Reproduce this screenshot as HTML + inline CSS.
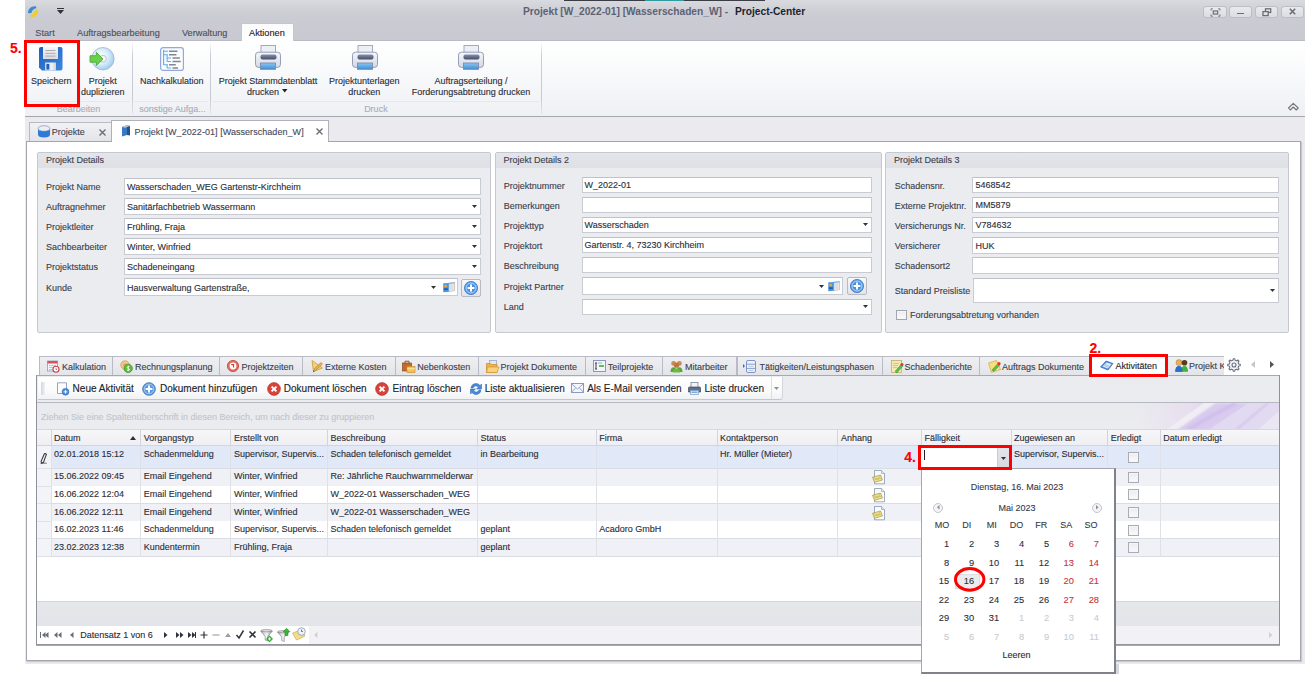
<!DOCTYPE html>
<html><head><meta charset="utf-8"><title>Project-Center</title>
<style>
*{margin:0;padding:0;box-sizing:border-box}
html,body{width:1306px;height:683px;overflow:hidden;background:#fff}
body{position:relative;font-family:"Liberation Sans",sans-serif;font-size:9px;color:#2c303b}
.a{position:absolute}
.t{position:absolute;white-space:nowrap;-webkit-text-stroke-width:0.12px}
svg{position:absolute;overflow:visible}
</style></head><body>

<div class="a" style="left:25px;top:0px;width:1280px;height:41px;background:linear-gradient(#d9dadf 0px,#cfd0d6 10px,#cacbd3 18px,#c8c9d1 40px);border-bottom:1px solid #babbc5"></div>
<div class="a" style="left:564px;top:0px;width:201px;height:1px;background:#3a3d44"></div>
<div class="a" style="left:645px;top:0px;width:39px;height:1px;background:#2f9aa0"></div>
<div class="t" style="left:523px;top:6px;font-size:10.2px;line-height:12.75px;color:#5d6273;font-weight:bold;-webkit-text-stroke-width:0">Projekt [W_2022-01] [Wasserschaden_W] -</div>
<div class="t" style="left:735px;top:6px;font-size:10.2px;line-height:12.75px;color:#20232c;font-weight:bold;-webkit-text-stroke-width:0">Project-Center</div>
<svg style="left:26.5px;top:5px" width="12" height="13" viewBox="0 0 12 13"><path d="M9 1.3C5 0.6 1 3.5 1 7.8C1.8 8.6 3.6 8.4 4.6 7.8C5 5.2 6.8 3.6 9.4 3.2Z" fill="#3b8bd0"/><path d="M3.8 12.2C8 12.7 11.2 9.2 11.2 5.2C10.4 4.4 8.8 4.6 7.8 5.2C7.4 8 5.8 9.6 3.2 10Z" fill="#f2cc2a"/></svg>
<div class="a" style="left:57px;top:8px;width:7px;height:1px;background:#30323a"></div>
<svg style="left:57px;top:10px" width="7" height="4"><path d="M0 0H7L3.5 4Z" fill="#30323a"/></svg>
<div class="a" style="left:1203px;top:5.5px;width:23.5px;height:12px;border:1px solid #bcbec6;border-radius:3px;background:linear-gradient(#e9eaee,#dcdde2)"></div>
<div class="a" style="left:1228.5px;top:5.5px;width:23.5px;height:12px;border:1px solid #bcbec6;border-radius:3px;background:linear-gradient(#e9eaee,#dcdde2)"></div>
<div class="a" style="left:1254.5px;top:5.5px;width:23.5px;height:12px;border:1px solid #bcbec6;border-radius:3px;background:linear-gradient(#e9eaee,#dcdde2)"></div>
<div class="a" style="left:1280.5px;top:5.5px;width:23.5px;height:12px;border:1px solid #bcbec6;border-radius:3px;background:linear-gradient(#e9eaee,#dcdde2)"></div>
<svg style="left:1209.5px;top:7.5px" width="11" height="9" viewBox="0 0 11 9"><path d="M1 2.5V0.8H2.8M8.2 0.8H10V2.5M10 6.5V8.2H8.2M2.8 8.2H1V6.5" stroke="#6a6d77" fill="none" stroke-width="0.9"/><rect x="3.3" y="3" width="4.4" height="3" stroke="#6a6d77" fill="none" stroke-width="1.2"/></svg>
<div class="a" style="left:1236.5px;top:12.5px;width:7px;height:1.8px;background:#6a6d77"></div>
<svg style="left:1262px;top:7.5px" width="10" height="9" viewBox="0 0 10 9"><rect x="3.5" y="0.8" width="5.2" height="3.6" stroke="#6a6d77" fill="none" stroke-width="1.3"/><rect x="1" y="3.6" width="5.2" height="4" stroke="#6a6d77" fill="#e3e4e8" stroke-width="1.3"/></svg>
<svg style="left:1288.5px;top:8px" width="7" height="7" viewBox="0 0 7 7"><path d="M0.8 0.8L6.2 6.2M6.2 0.8L0.8 6.2" stroke="#6a6d77" stroke-width="1.6"/></svg>
<div class="t" style="left:35.3px;top:28px;font-size:9.2px;line-height:11.5px;color:#4c505c;">Start</div>
<div class="t" style="left:77px;top:28px;font-size:9.2px;line-height:11.5px;color:#4c505c;">Auftragsbearbeitung</div>
<div class="t" style="left:182px;top:28px;font-size:9.2px;line-height:11.5px;color:#4c505c;">Verwaltung</div>
<div class="a" style="left:240.5px;top:23px;width:53px;height:19px;background:linear-gradient(#fbfbfc,#ffffff);border:1px solid #c4c6ce;border-bottom:none;border-radius:2px 2px 0 0"></div>
<div class="t" style="left:249px;top:28px;font-size:9.2px;line-height:11.5px;color:#1e2028;">Aktionen</div>
<div class="a" style="left:25px;top:41px;width:1280px;height:75px;background:linear-gradient(#ffffff,#f7f8fa 50%,#eff0f4)"></div>
<div class="a" style="left:25px;top:116px;width:1280px;height:1px;background:#a4a6b0"></div>
<div class="a" style="left:132px;top:42px;width:1px;height:72px;background:linear-gradient(rgba(200,202,210,0),#c9cbd3 20%,#c9cbd3 80%,rgba(200,202,210,0.3))"></div>
<div class="a" style="left:210px;top:42px;width:1px;height:72px;background:linear-gradient(rgba(200,202,210,0),#c9cbd3 20%,#c9cbd3 80%,rgba(200,202,210,0.3))"></div>
<div class="a" style="left:541px;top:42px;width:1px;height:72px;background:linear-gradient(rgba(200,202,210,0),#c9cbd3 20%,#c9cbd3 80%,rgba(200,202,210,0.3))"></div>
<div class="a" style="left:27px;top:101px;width:103px;height:1px;background:#e6e7ec"></div>
<div class="a" style="left:135px;top:101px;width:73px;height:1px;background:#e6e7ec"></div>
<div class="a" style="left:213px;top:101px;width:326px;height:1px;background:#e6e7ec"></div>
<div class="t" style="left:-121.4px;width:400px;text-align:center;top:104px;font-size:9px;line-height:11.25px;color:#a9adb9;">Bearbeiten</div>
<div class="t" style="left:-27.5px;width:400px;text-align:center;top:104px;font-size:9px;line-height:11.25px;color:#a9adb9;">sonstige Aufga...</div>
<div class="t" style="left:175.89999999999998px;width:400px;text-align:center;top:104px;font-size:9px;line-height:11.25px;color:#a9adb9;">Druck</div>
<svg style="left:1287px;top:102px" width="13" height="10" viewBox="0 0 13 10"><path d="M1.5 6L6.3 1.3L11.2 6L9.3 8L6.3 5L3.3 8Z" stroke="#6f727b" fill="#f4f5f8" stroke-width="1.1" stroke-linejoin="round"/></svg>
<div class="t" style="left:31px;top:76px;font-size:9px;line-height:11.25px;color:#2b2e37;">Speichern</div>
<div class="t" style="left:-97.3px;width:400px;text-align:center;top:76px;font-size:9px;line-height:11.25px;color:#2b2e37;">Projekt</div>
<div class="t" style="left:-97.3px;width:400px;text-align:center;top:87px;font-size:9px;line-height:11.25px;color:#2b2e37;">duplizieren</div>
<div class="t" style="left:140px;top:76px;font-size:9px;line-height:11.25px;color:#2b2e37;">Nachkalkulation</div>
<div class="t" style="left:218.7px;top:76px;font-size:9px;line-height:11.25px;color:#2b2e37;">Projekt Stammdatenblatt</div>
<div class="t" style="left:63px;width:400px;text-align:center;top:87px;font-size:9px;line-height:11.25px;color:#2b2e37;">drucken</div>
<svg style="left:282px;top:89px" width="5.5" height="3.5"><path d="M0 0H5.5L2.75 3.5Z" fill="#1f2129"/></svg>
<div class="t" style="left:164.2px;width:400px;text-align:center;top:76px;font-size:9px;line-height:11.25px;color:#2b2e37;">Projektunterlagen</div>
<div class="t" style="left:164.2px;width:400px;text-align:center;top:87px;font-size:9px;line-height:11.25px;color:#2b2e37;">drucken</div>
<div class="t" style="left:271px;width:400px;text-align:center;top:76px;font-size:9px;line-height:11.25px;color:#2b2e37;">Auftragserteilung /</div>
<div class="t" style="left:271px;width:400px;text-align:center;top:87px;font-size:9px;line-height:11.25px;color:#2b2e37;">Forderungsabtretung drucken</div>
<svg style="left:39px;top:46.5px" width="24" height="24" viewBox="0 0 24 24">
<defs><linearGradient id="fl" x1="0" y1="0" x2="1" y2="1"><stop offset="0" stop-color="#1f5fc0"/><stop offset="1" stop-color="#3c88da"/></linearGradient>
<linearGradient id="fp" x1="0" y1="0" x2="0" y2="1"><stop offset="0" stop-color="#f6f6f7"/><stop offset="1" stop-color="#dadbdf"/></linearGradient>
<linearGradient id="fs" x1="0" y1="0" x2="1" y2="0"><stop offset="0" stop-color="#c9cacf"/><stop offset="0.6" stop-color="#f3f3f4"/><stop offset="1" stop-color="#d0d1d5"/></linearGradient></defs>
<path d="M2 0H21.5Q23.5 0 23.5 2V21.5Q23.5 23.5 21.5 23.5H3L0 20.5V2Q0 0 2 0Z" fill="url(#fl)"/>
<rect x="4" y="0" width="15" height="12" fill="url(#fp)"/>
<path d="M6.5 3.5H16.5M6.5 6.3H16.5M6.5 9.1H16.5" stroke="#a8abb3" stroke-width="1"/>
<rect x="6" y="15.5" width="11" height="8" fill="url(#fs)"/>
<rect x="7.5" y="17" width="2.8" height="5.5" fill="#1f5fc0"/>
</svg>
<svg style="left:89px;top:46.5px" width="26" height="24" viewBox="0 0 26 24">
<defs><radialGradient id="dg" cx="0.4" cy="0.4" r="0.7"><stop offset="0" stop-color="#ffffff"/><stop offset="0.5" stop-color="#d6ecfb"/><stop offset="1" stop-color="#8fc4ee"/></radialGradient></defs>
<circle cx="13.9" cy="11.7" r="11.2" fill="url(#dg)" stroke="#a7b0bd" stroke-width="0.8"/>
<circle cx="13.9" cy="11.7" r="3.4" fill="#f2f4f7" stroke="#b9bec7" stroke-width="0.9"/>
<circle cx="13.9" cy="11.7" r="1.6" fill="#ffffff"/>
<path d="M1 8.7H7.3V5.3L14 12L7.3 18.6V15.2H1Z" fill="#6ad04a" stroke="#43a52f" stroke-width="0.8"/>
</svg>
<svg style="left:160px;top:46.5px" width="24" height="24" viewBox="0 0 24 24">
<defs><linearGradient id="nk" x1="0" y1="0" x2="1" y2="1"><stop offset="0" stop-color="#f2f7fd"/><stop offset="1" stop-color="#ffffff"/></linearGradient></defs>
<rect x="0.6" y="0.6" width="22.8" height="22.8" rx="2.5" fill="url(#nk)" stroke="#93a9dc" stroke-width="1.2"/>
<path d="M3.6 2.8V18M3.6 4.2H8M3.6 7.7H8M7.1 7.7V14.5M7.1 11H11M7.1 14.5H11M3.6 17.7H8M7.1 17.7V21M7.1 21H11" stroke="#62aef0" stroke-width="1.1" fill="none"/>
<path d="M9 4.2H17.5M9 7.7H16.4M12.5 11H19.9M12.5 14.5H20.8M9 17.7H15.8M12.5 21H18.1" stroke="#85878e" stroke-width="1.5"/>
</svg>
<svg style="left:255px;top:45px" width="26" height="25" viewBox="0 0 26 25">
<defs><linearGradient id="pb268" x1="0" y1="0" x2="0" y2="1"><stop offset="0" stop-color="#f6f7fa"/><stop offset="1" stop-color="#d3d8e3"/></linearGradient>
<linearGradient id="ps268" x1="0" y1="0" x2="0" y2="1"><stop offset="0" stop-color="#8691aa"/><stop offset="1" stop-color="#434d67"/></linearGradient>
<linearGradient id="pt268" x1="0" y1="0" x2="0" y2="1"><stop offset="0" stop-color="#8cc6f2"/><stop offset="1" stop-color="#3d8fd8"/></linearGradient></defs>
<rect x="6" y="0.5" width="14.5" height="9" fill="#eceff5" stroke="#98a3bc" stroke-width="0.9"/>
<rect x="0.5" y="7.2" width="25" height="15.2" rx="3" fill="url(#pb268)" stroke="#8995b0" stroke-width="0.9"/>
<rect x="5.5" y="9.5" width="16" height="5" rx="2" fill="url(#ps268)"/>
<rect x="5.5" y="18" width="15" height="6.3" fill="url(#pt268)" stroke="#7b8bb0" stroke-width="0.9"/>
</svg>
<svg style="left:351.7px;top:45px" width="26" height="25" viewBox="0 0 26 25">
<defs><linearGradient id="pb364" x1="0" y1="0" x2="0" y2="1"><stop offset="0" stop-color="#f6f7fa"/><stop offset="1" stop-color="#d3d8e3"/></linearGradient>
<linearGradient id="ps364" x1="0" y1="0" x2="0" y2="1"><stop offset="0" stop-color="#8691aa"/><stop offset="1" stop-color="#434d67"/></linearGradient>
<linearGradient id="pt364" x1="0" y1="0" x2="0" y2="1"><stop offset="0" stop-color="#8cc6f2"/><stop offset="1" stop-color="#3d8fd8"/></linearGradient></defs>
<rect x="6" y="0.5" width="14.5" height="9" fill="#eceff5" stroke="#98a3bc" stroke-width="0.9"/>
<rect x="0.5" y="7.2" width="25" height="15.2" rx="3" fill="url(#pb364)" stroke="#8995b0" stroke-width="0.9"/>
<rect x="5.5" y="9.5" width="16" height="5" rx="2" fill="url(#ps364)"/>
<rect x="5.5" y="18" width="15" height="6.3" fill="url(#pt364)" stroke="#7b8bb0" stroke-width="0.9"/>
</svg>
<svg style="left:458.4px;top:45px" width="26" height="25" viewBox="0 0 26 25">
<defs><linearGradient id="pb471" x1="0" y1="0" x2="0" y2="1"><stop offset="0" stop-color="#f6f7fa"/><stop offset="1" stop-color="#d3d8e3"/></linearGradient>
<linearGradient id="ps471" x1="0" y1="0" x2="0" y2="1"><stop offset="0" stop-color="#8691aa"/><stop offset="1" stop-color="#434d67"/></linearGradient>
<linearGradient id="pt471" x1="0" y1="0" x2="0" y2="1"><stop offset="0" stop-color="#8cc6f2"/><stop offset="1" stop-color="#3d8fd8"/></linearGradient></defs>
<rect x="6" y="0.5" width="14.5" height="9" fill="#eceff5" stroke="#98a3bc" stroke-width="0.9"/>
<rect x="0.5" y="7.2" width="25" height="15.2" rx="3" fill="url(#pb471)" stroke="#8995b0" stroke-width="0.9"/>
<rect x="5.5" y="9.5" width="16" height="5" rx="2" fill="url(#ps471)"/>
<rect x="5.5" y="18" width="15" height="6.3" fill="url(#pt471)" stroke="#7b8bb0" stroke-width="0.9"/>
</svg>
<div class="a" style="left:25px;top:117px;width:1280px;height:547px;background:#ebebef"></div>
<div class="a" style="left:29px;top:122px;width:83px;height:20px;background:linear-gradient(#f2f2f5,#e2e3e8);border:1px solid #b8bac3;border-bottom:none"></div>
<div class="a" style="left:111px;top:120px;width:218px;height:22px;background:#ffffff;border:1px solid #b0b2bb;border-bottom:none"></div>
<div class="a" style="left:26px;top:141px;width:1275px;height:520px;background:#ffffff;border:1px solid #a3a5af;box-shadow:1px 1px 1px rgba(120,122,130,0.3)"></div>
<div class="a" style="left:112px;top:141px;width:216px;height:1px;background:#ffffff"></div>
<svg style="left:37px;top:125px" width="14" height="13" viewBox="0 0 14 13">
<ellipse cx="7" cy="3.5" rx="6" ry="2.8" fill="#e8eef6" stroke="#8a9cb3" stroke-width="0.8"/>
<path d="M1 3.5V9.5Q1 12.5 7 12.5Q13 12.5 13 9.5V3.5Q13 6.3 7 6.3Q1 6.3 1 3.5Z" fill="#2d7bd6"/>
</svg>
<div class="t" style="left:51.8px;top:127px;font-size:9px;line-height:11.25px;color:#3e4252;">Projekte</div>
<svg style="left:99px;top:128.5px" width="7" height="7"><path d="M0.5 0.5L6.5 6.5M6.5 0.5L0.5 6.5" stroke="#6b6e78" stroke-width="1.4"/></svg>
<svg style="left:121px;top:124px" width="10" height="13" viewBox="0 0 10 13">
<path d="M1 3L6 1V11L1 12.5Z" fill="#3a78c2"/><path d="M6 1L9 2V11.5L6 11Z" fill="#25508a"/><path d="M1 3L6 1L9 2L4 3.8Z" fill="#b8c8dc"/>
</svg>
<div class="t" style="left:134.6px;top:127px;font-size:9px;line-height:11.25px;color:#454a5a;letter-spacing:0.05px">Projekt [W_2022-01] [Wasserschaden_W]</div>
<svg style="left:316px;top:128px" width="7" height="7"><path d="M0.5 0.5L6.5 6.5M6.5 0.5L0.5 6.5" stroke="#6b6e78" stroke-width="1.4"/></svg>
<div class="a" style="left:37px;top:152px;width:454px;height:180.5px;background:#ebecf0;border:1px solid #c6c8d0;border-radius:2px"></div>
<div class="a" style="left:38px;top:153px;width:452px;height:15px;background:linear-gradient(#e4e5ea,#dfe0e6)"></div>
<div class="t" style="left:46px;top:155px;font-size:9px;line-height:11.25px;color:#3a3e4a;">Projekt Details</div>
<div class="t" style="left:46px;top:182px;font-size:9px;line-height:11.25px;color:#3a3e4a;">Projekt Name</div>
<div class="a" style="left:124px;top:178px;width:357px;height:17px;background:#ffffff;border:1px solid #c9cbd3;border-top-color:#bfc1c9"></div>
<div class="t" style="left:127px;top:182px;font-size:9px;line-height:11.25px;color:#2b2e37;">Wasserschaden_WEG Gartenstr-Kirchheim</div>
<div class="t" style="left:46px;top:202px;font-size:9px;line-height:11.25px;color:#3a3e4a;">Auftragnehmer</div>
<div class="a" style="left:124px;top:198px;width:357px;height:17px;background:#ffffff;border:1px solid #c9cbd3;border-top-color:#bfc1c9"></div>
<div class="t" style="left:127px;top:202px;font-size:9px;line-height:11.25px;color:#2b2e37;">Sanitärfachbetrieb Wassermann</div>
<svg style="left:472px;top:204.5px" width="5" height="3"><path d="M0 0H5L2.5 3Z" fill="#30333c"/></svg>
<div class="t" style="left:46px;top:222px;font-size:9px;line-height:11.25px;color:#3a3e4a;">Projektleiter</div>
<div class="a" style="left:124px;top:218px;width:357px;height:17px;background:#ffffff;border:1px solid #c9cbd3;border-top-color:#bfc1c9"></div>
<div class="t" style="left:127px;top:222px;font-size:9px;line-height:11.25px;color:#2b2e37;">Frühling, Fraja</div>
<svg style="left:472px;top:224.5px" width="5" height="3"><path d="M0 0H5L2.5 3Z" fill="#30333c"/></svg>
<div class="t" style="left:46px;top:242px;font-size:9px;line-height:11.25px;color:#3a3e4a;">Sachbearbeiter</div>
<div class="a" style="left:124px;top:238px;width:357px;height:17px;background:#ffffff;border:1px solid #c9cbd3;border-top-color:#bfc1c9"></div>
<div class="t" style="left:127px;top:242px;font-size:9px;line-height:11.25px;color:#2b2e37;">Winter, Winfried</div>
<svg style="left:472px;top:244.5px" width="5" height="3"><path d="M0 0H5L2.5 3Z" fill="#30333c"/></svg>
<div class="t" style="left:46px;top:262px;font-size:9px;line-height:11.25px;color:#3a3e4a;">Projektstatus</div>
<div class="a" style="left:124px;top:258px;width:357px;height:17px;background:#ffffff;border:1px solid #c9cbd3;border-top-color:#bfc1c9"></div>
<div class="t" style="left:127px;top:262px;font-size:9px;line-height:11.25px;color:#2b2e37;">Schadeneingang</div>
<svg style="left:472px;top:264.5px" width="5" height="3"><path d="M0 0H5L2.5 3Z" fill="#30333c"/></svg>
<div class="t" style="left:46px;top:283px;font-size:9px;line-height:11.25px;color:#3a3e4a;">Kunde</div>
<div class="a" style="left:124px;top:278.3px;width:334px;height:18px;background:#ffffff;border:1px solid #c9cbd3;border-top-color:#bfc1c9"></div>
<div class="t" style="left:127px;top:283px;font-size:9px;line-height:11.25px;color:#2b2e37;">Hausverwaltung Gartenstraße,</div>
<svg style="left:431px;top:286px" width="5" height="3"><path d="M0 0H5L2.5 3Z" fill="#30333c"/></svg>
<svg style="left:442.5px;top:282.3px" width="12" height="11" viewBox="0 0 12 11">
<path d="M5.8 0.9L11.6 0.4V8.6L5.8 9.8Z" fill="#ececec" stroke="#9d9d9d" stroke-width="0.5"/>
<path d="M7.2 3H10.2M7.2 5H10.2M7.2 7H10.2" stroke="#b5b5b5" stroke-width="0.5"/>
<path d="M0.3 1.4L5.8 0.9V9.8L0.3 10.3Z" fill="#3f93e2"/>
<path d="M0.3 1.4L11.6 0.4V1.3L0.3 2.3Z" fill="#5aa8ee"/>
<circle cx="2.7" cy="4" r="1.6" fill="#f2a22e"/>
<path d="M0.8 6.2H4.8V8H0.8Z" fill="#1d5fba"/></svg>
<div class="a" style="left:461px;top:279px;width:20px;height:18px;background:linear-gradient(#f8f8fa,#e3e4e9);border:1px solid #b8bac3;border-radius:2px"></div>
<svg style="left:464.0px;top:281.0px" width="14" height="14" viewBox="0 0 14 14">
<circle cx="7" cy="7" r="6.6" fill="#5b9fe3" stroke="#3a78c8" stroke-width="0.8"/>
<circle cx="7" cy="7" r="4.9" fill="#4a90dc" stroke="#b6d8f6" stroke-width="0.9"/>
<path d="M7 3.6V10.4M3.6 7H10.4" stroke="#ffffff" stroke-width="2"/></svg>
<div class="a" style="left:494.5px;top:152px;width:387.0px;height:180.5px;background:#ebecf0;border:1px solid #c6c8d0;border-radius:2px"></div>
<div class="a" style="left:495.5px;top:153px;width:385.0px;height:15px;background:linear-gradient(#e4e5ea,#dfe0e6)"></div>
<div class="t" style="left:503.5px;top:155px;font-size:9px;line-height:11.25px;color:#3a3e4a;">Projekt Details 2</div>
<div class="t" style="left:503.8px;top:181px;font-size:9px;line-height:11.25px;color:#3a3e4a;">Projektnummer</div>
<div class="a" style="left:581.5px;top:176.7px;width:290.0px;height:16.5px;background:#ffffff;border:1px solid #c9cbd3;border-top-color:#bfc1c9"></div>
<div class="t" style="left:584.5px;top:180px;font-size:9px;line-height:11.25px;color:#2b2e37;">W_2022-01</div>
<div class="t" style="left:503.8px;top:201px;font-size:9px;line-height:11.25px;color:#3a3e4a;">Bemerkungen</div>
<div class="a" style="left:581.5px;top:196.75px;width:290.0px;height:16.5px;background:#ffffff;border:1px solid #c9cbd3;border-top-color:#bfc1c9"></div>
<div class="t" style="left:503.8px;top:221px;font-size:9px;line-height:11.25px;color:#3a3e4a;">Projekttyp</div>
<div class="a" style="left:581.5px;top:216.79999999999998px;width:290.0px;height:16.5px;background:#ffffff;border:1px solid #c9cbd3;border-top-color:#bfc1c9"></div>
<div class="t" style="left:584.5px;top:220px;font-size:9px;line-height:11.25px;color:#2b2e37;">Wasserschaden</div>
<svg style="left:862.5px;top:223.04999999999998px" width="5" height="3"><path d="M0 0H5L2.5 3Z" fill="#30333c"/></svg>
<div class="t" style="left:503.8px;top:241px;font-size:9px;line-height:11.25px;color:#3a3e4a;">Projektort</div>
<div class="a" style="left:581.5px;top:236.85px;width:290.0px;height:16.5px;background:#ffffff;border:1px solid #c9cbd3;border-top-color:#bfc1c9"></div>
<div class="t" style="left:584.5px;top:240px;font-size:9px;line-height:11.25px;color:#2b2e37;">Gartenstr. 4, 73230 Kirchheim</div>
<div class="t" style="left:503.8px;top:261px;font-size:9px;line-height:11.25px;color:#3a3e4a;">Beschreibung</div>
<div class="a" style="left:581.5px;top:256.9px;width:290.0px;height:16.5px;background:#ffffff;border:1px solid #c9cbd3;border-top-color:#bfc1c9"></div>
<div class="t" style="left:503.8px;top:282px;font-size:9px;line-height:11.25px;color:#3a3e4a;">Projekt Partner</div>
<div class="a" style="left:581.5px;top:276.8px;width:261.5px;height:18px;background:#ffffff;border:1px solid #c9cbd3;border-top-color:#bfc1c9"></div>
<svg style="left:819px;top:284.5px" width="5" height="3"><path d="M0 0H5L2.5 3Z" fill="#30333c"/></svg>
<svg style="left:828px;top:280.5px" width="12" height="11" viewBox="0 0 12 11">
<path d="M5.8 0.9L11.6 0.4V8.6L5.8 9.8Z" fill="#ececec" stroke="#9d9d9d" stroke-width="0.5"/>
<path d="M7.2 3H10.2M7.2 5H10.2M7.2 7H10.2" stroke="#b5b5b5" stroke-width="0.5"/>
<path d="M0.3 1.4L5.8 0.9V9.8L0.3 10.3Z" fill="#3f93e2"/>
<path d="M0.3 1.4L11.6 0.4V1.3L0.3 2.3Z" fill="#5aa8ee"/>
<circle cx="2.7" cy="4" r="1.6" fill="#f2a22e"/>
<path d="M0.8 6.2H4.8V8H0.8Z" fill="#1d5fba"/></svg>
<div class="a" style="left:847px;top:277px;width:19.5px;height:18px;background:linear-gradient(#f8f8fa,#e3e4e9);border:1px solid #b8bac3;border-radius:2px"></div>
<svg style="left:849.75px;top:279.0px" width="14" height="14" viewBox="0 0 14 14">
<circle cx="7" cy="7" r="6.6" fill="#5b9fe3" stroke="#3a78c8" stroke-width="0.8"/>
<circle cx="7" cy="7" r="4.9" fill="#4a90dc" stroke="#b6d8f6" stroke-width="0.9"/>
<path d="M7 3.6V10.4M3.6 7H10.4" stroke="#ffffff" stroke-width="2"/></svg>
<div class="t" style="left:503.8px;top:302px;font-size:9px;line-height:11.25px;color:#3a3e4a;">Land</div>
<div class="a" style="left:581.5px;top:298.7px;width:290.0px;height:16px;background:#ffffff;border:1px solid #c9cbd3;border-top-color:#bfc1c9"></div>
<svg style="left:862.5px;top:304.7px" width="5" height="3"><path d="M0 0H5L2.5 3Z" fill="#30333c"/></svg>
<div class="a" style="left:885px;top:152px;width:404px;height:180.5px;background:#ebecf0;border:1px solid #c6c8d0;border-radius:2px"></div>
<div class="a" style="left:886px;top:153px;width:402px;height:15px;background:linear-gradient(#e4e5ea,#dfe0e6)"></div>
<div class="t" style="left:894px;top:155px;font-size:9px;line-height:11.25px;color:#3a3e4a;">Projekt Details 3</div>
<div class="t" style="left:894.7px;top:181px;font-size:9px;line-height:11.25px;color:#3a3e4a;">Schadensnr.</div>
<div class="a" style="left:972.4px;top:176.7px;width:306.6px;height:16.6px;background:#ffffff;border:1px solid #c9cbd3;border-top-color:#bfc1c9"></div>
<div class="t" style="left:975.4px;top:180px;font-size:9px;line-height:11.25px;color:#2b2e37;">5468542</div>
<div class="t" style="left:894.7px;top:201px;font-size:9px;line-height:11.25px;color:#3a3e4a;">Externe Projektnr.</div>
<div class="a" style="left:972.4px;top:196.79999999999998px;width:306.6px;height:16.6px;background:#ffffff;border:1px solid #c9cbd3;border-top-color:#bfc1c9"></div>
<div class="t" style="left:975.4px;top:200px;font-size:9px;line-height:11.25px;color:#2b2e37;">MM5879</div>
<div class="t" style="left:894.7px;top:221px;font-size:9px;line-height:11.25px;color:#3a3e4a;">Versicherungs Nr.</div>
<div class="a" style="left:972.4px;top:216.89999999999998px;width:306.6px;height:16.6px;background:#ffffff;border:1px solid #c9cbd3;border-top-color:#bfc1c9"></div>
<div class="t" style="left:975.4px;top:220px;font-size:9px;line-height:11.25px;color:#2b2e37;">V784632</div>
<div class="t" style="left:894.7px;top:241px;font-size:9px;line-height:11.25px;color:#3a3e4a;">Versicherer</div>
<div class="a" style="left:972.4px;top:237.0px;width:306.6px;height:16.6px;background:#ffffff;border:1px solid #c9cbd3;border-top-color:#bfc1c9"></div>
<div class="t" style="left:975.4px;top:241px;font-size:9px;line-height:11.25px;color:#2b2e37;">HUK</div>
<div class="t" style="left:894.7px;top:261px;font-size:9px;line-height:11.25px;color:#3a3e4a;">Schadensort2</div>
<div class="a" style="left:972.4px;top:257.1px;width:306.6px;height:16.6px;background:#ffffff;border:1px solid #c9cbd3;border-top-color:#bfc1c9"></div>
<div class="t" style="left:894.7px;top:286px;font-size:9px;line-height:11.25px;color:#3a3e4a;">Standard Preisliste</div>
<div class="a" style="left:972.5px;top:278px;width:306.5px;height:25px;background:#ffffff;border:1px solid #c9cbd3;border-top-color:#bfc1c9"></div>
<svg style="left:1270px;top:288.5px" width="5" height="3"><path d="M0 0H5L2.5 3Z" fill="#30333c"/></svg>
<div class="a" style="left:896px;top:309.5px;width:10.5px;height:10.5px;background:linear-gradient(#ececef,#fafafb);border:1px solid #a3a6af;box-shadow:inset 0 0 0 1px #f6f6f8"></div>
<div class="t" style="left:910px;top:310px;font-size:9px;line-height:11.25px;color:#3a3e4a;">Forderungsabtretung vorhanden</div>
<div class="a" style="left:39.2px;top:356px;width:74.2px;height:19.5px;background:linear-gradient(#efeff2,#e3e4e8);border:1px solid #b9bbc4;border-bottom:none"></div>
<div class="t" style="left:61.9px;top:362px;font-size:9px;line-height:11.25px;color:#3a3e4a;">Kalkulation</div>
<div class="a" style="left:112.4px;top:356px;width:107.5px;height:19.5px;background:linear-gradient(#efeff2,#e3e4e8);border:1px solid #b9bbc4;border-bottom:none"></div>
<div class="t" style="left:135px;top:362px;font-size:9px;line-height:11.25px;color:#3a3e4a;">Rechnungsplanung</div>
<div class="a" style="left:218.9px;top:356px;width:84.29999999999998px;height:19.5px;background:linear-gradient(#efeff2,#e3e4e8);border:1px solid #b9bbc4;border-bottom:none"></div>
<div class="t" style="left:241.4px;top:362px;font-size:9px;line-height:11.25px;color:#3a3e4a;">Projektzeiten</div>
<div class="a" style="left:302.2px;top:356px;width:93.60000000000002px;height:19.5px;background:linear-gradient(#efeff2,#e3e4e8);border:1px solid #b9bbc4;border-bottom:none"></div>
<div class="t" style="left:325px;top:362px;font-size:9px;line-height:11.25px;color:#3a3e4a;">Externe Kosten</div>
<div class="a" style="left:394.8px;top:356px;width:84.19999999999999px;height:19.5px;background:linear-gradient(#efeff2,#e3e4e8);border:1px solid #b9bbc4;border-bottom:none"></div>
<div class="t" style="left:417.3px;top:362px;font-size:9px;line-height:11.25px;color:#3a3e4a;">Nebenkosten</div>
<div class="a" style="left:478px;top:356px;width:107.89999999999998px;height:19.5px;background:linear-gradient(#efeff2,#e3e4e8);border:1px solid #b9bbc4;border-bottom:none"></div>
<div class="t" style="left:500.6px;top:362px;font-size:9px;line-height:11.25px;color:#3a3e4a;">Projekt Dokumente</div>
<div class="a" style="left:584.9px;top:356px;width:78.5px;height:19.5px;background:linear-gradient(#efeff2,#e3e4e8);border:1px solid #b9bbc4;border-bottom:none"></div>
<div class="t" style="left:607.8px;top:362px;font-size:9px;line-height:11.25px;color:#3a3e4a;">Teilprojekte</div>
<div class="a" style="left:662.4px;top:356px;width:75.10000000000002px;height:19.5px;background:linear-gradient(#efeff2,#e3e4e8);border:1px solid #b9bbc4;border-bottom:none"></div>
<div class="t" style="left:685px;top:362px;font-size:9px;line-height:11.25px;color:#3a3e4a;">Mitarbeiter</div>
<div class="a" style="left:736.5px;top:356px;width:146.20000000000005px;height:19.5px;background:linear-gradient(#efeff2,#e3e4e8);border:1px solid #b9bbc4;border-bottom:none"></div>
<div class="t" style="left:759.4px;top:362px;font-size:9px;line-height:11.25px;color:#3a3e4a;">Tätigkeiten/Leistungsphasen</div>
<div class="a" style="left:881.7px;top:356px;width:98.5px;height:19.5px;background:linear-gradient(#efeff2,#e3e4e8);border:1px solid #b9bbc4;border-bottom:none"></div>
<div class="t" style="left:904.4px;top:362px;font-size:9px;line-height:11.25px;color:#3a3e4a;">Schadenberichte</div>
<div class="a" style="left:979.2px;top:356px;width:111.79999999999995px;height:19.5px;background:linear-gradient(#efeff2,#e3e4e8);border:1px solid #b9bbc4;border-bottom:none"></div>
<div class="t" style="left:1001.9px;top:362px;font-size:9px;line-height:11.25px;color:#3a3e4a;">Auftrags Dokumente</div>
<svg style="left:47.2px;top:359.5px" width="14" height="14" viewBox="0 0 14 14"><rect x="0.5" y="1" width="10" height="10" fill="#f3f5fa" stroke="#8d9cc0" stroke-width="0.8"/><rect x="0.5" y="1" width="10" height="2.5" fill="#e0505a"/><path d="M2 5.5H9M2 7.5H6M2 9.5H6" stroke="#b0bbd6" stroke-width="0.8"/><circle cx="9" cy="9.3" r="3" fill="#fff" stroke="#c9404a" stroke-width="1.1"/><path d="M9 7.8V9.4H10.2" stroke="#c9404a" stroke-width="0.7" fill="none"/></svg>
<svg style="left:119.9px;top:359.5px" width="14" height="14" viewBox="0 0 14 14"><circle cx="5" cy="5" r="4.2" fill="#f4c88e" stroke="#d79a52" stroke-width="0.8"/><circle cx="5" cy="5" r="2" fill="#e8a966"/><circle cx="8.2" cy="8.4" r="4.2" fill="#5cbc3c" stroke="#3c8e2a" stroke-width="0.7"/><path d="M9.4 6.6Q7 6.2 7.2 7.8Q7.6 8.6 8.6 8.6Q9.8 8.8 9.4 10Q8.8 10.6 7 10.2M8.3 5.6V11.2" stroke="#fff" stroke-width="0.8" fill="none"/></svg>
<svg style="left:226.6px;top:359.5px" width="14" height="14" viewBox="0 0 14 14"><circle cx="6" cy="6" r="5.6" fill="#e56a5c" stroke="#c2423a" stroke-width="0.8"/><circle cx="6" cy="6" r="3.4" fill="#fff"/><path d="M4.2 4.6H6.6V7.6" stroke="#c2423a" stroke-width="1.1" fill="none"/></svg>
<svg style="left:310.5px;top:359.5px" width="14" height="14" viewBox="0 0 14 14"><path d="M1 0.5L2.5 11.5L11.5 8Z" fill="#f2d27a" stroke="#c79a3a" stroke-width="0.8"/><path d="M3 9L10 2.5L11.5 4L4.5 10.5Z" fill="#e8b050" stroke="#b77d2a" stroke-width="0.6"/><path d="M2.5 10.5L3 12" stroke="#3a5a9a" stroke-width="1.2"/></svg>
<svg style="left:401.8px;top:359.5px" width="14" height="14" viewBox="0 0 14 14"><rect x="0.5" y="3" width="9" height="8" fill="#c36a2c" stroke="#8e4a1c" stroke-width="0.7"/><path d="M3 3V1.2H7V3" stroke="#8e4a1c" fill="none" stroke-width="0.9"/><rect x="5" y="6.5" width="8" height="6" fill="#f6c154" stroke="#cc8f2c" stroke-width="0.7"/><path d="M5 8.8H13" stroke="#fff2c8" stroke-width="0.8"/></svg>
<svg style="left:485.5px;top:359.5px" width="14" height="14" viewBox="0 0 14 14"><rect x="3.5" y="0.5" width="7" height="7" fill="#dfe6f6" stroke="#8e9ec6" stroke-width="0.7"/><path d="M0.5 3.5H4.5L5.5 4.5H11V12.5H0.5Z" fill="#efb24a" stroke="#c98a2a" stroke-width="0.7"/><path d="M1.5 7H13L11 12.5H0.5Z" fill="#f8d27a" stroke="#c98a2a" stroke-width="0.6"/></svg>
<svg style="left:592.6px;top:359.5px" width="14" height="14" viewBox="0 0 14 14"><rect x="0.5" y="0.5" width="12" height="11" fill="#f3f5fa" stroke="#7f8fb8" stroke-width="0.9"/><path d="M3 3V9M2 3H4M2 9H4" stroke="#3b3e48" stroke-width="1"/><rect x="6" y="5" width="5" height="2" fill="#5ec050"/><path d="M5 3H9" stroke="#8a95aa" stroke-width="0.8"/></svg>
<svg style="left:670px;top:359.5px" width="14" height="14" viewBox="0 0 14 14"><circle cx="3.6" cy="3.4" r="2.4" fill="#c98a58"/><circle cx="9.4" cy="3.4" r="2.4" fill="#c98a58"/><circle cx="6.5" cy="5.2" r="2.6" fill="#b87840"/><path d="M0.5 12Q0.5 7 4 7.2Q6.5 8 6.5 12Z M6.5 12Q6.5 8 9 7.2Q12.5 7 12.5 12Z" fill="#5aa63a"/><path d="M2.8 12.5Q3 8.6 6.5 8.6Q10 8.6 10.2 12.5Z" fill="#6cbc42"/></svg>
<svg style="left:743px;top:359.5px" width="14" height="14" viewBox="0 0 14 14"><path d="M0 4V8L2 6Z" fill="#2a6ed0"/><rect x="3.5" y="0.5" width="9" height="12" rx="1.5" fill="#eef2fa" stroke="#6f8cc4" stroke-width="0.9"/><path d="M3.5 4.2H12.5M3.5 8.4H12.5" stroke="#6f8cc4" stroke-width="0.8"/><path d="M5.5 6.3H10.5M5.5 10.5H10.5" stroke="#b3c0dc" stroke-width="0.8"/></svg>
<svg style="left:890.7px;top:359.5px" width="14" height="14" viewBox="0 0 14 14"><rect x="0.5" y="0.5" width="10" height="12" fill="#f3e9b6" stroke="#c4ae5a" stroke-width="0.8"/><path d="M2 3.5H8M2 5.5H7M2 7.5H6" stroke="#c9b874" stroke-width="0.7"/><path d="M4 11.5L10 4.5L11.8 6L5.8 13Z" fill="#58c048" stroke="#348a2a" stroke-width="0.5"/><circle cx="11" cy="4.6" r="1.5" fill="#e0333a"/></svg>
<svg style="left:987.5px;top:359.5px" width="14" height="14" viewBox="0 0 14 14"><path d="M0.5 3L8.5 0.5L12.5 9.5L3.5 12.5Z" fill="#f6de7a" stroke="#d2b04a" stroke-width="0.8"/><path d="M4 10L10 3.5L11.8 5L5.8 11.5Z" fill="#58c048" stroke="#348a2a" stroke-width="0.5"/><circle cx="11" cy="3.6" r="1.6" fill="#e0333a"/></svg>
<div class="a" style="left:1090px;top:354.5px;width:77px;height:22px;background:#ffffff;border:1px solid #b0b2bb;border-bottom:none"></div>
<div class="t" style="left:1115.4px;top:361px;font-size:9px;line-height:11.25px;color:#1f2229;">Aktivitäten</div>
<svg style="left:1100px;top:359px" width="14" height="14" viewBox="0 0 14 14"><path d="M0.5 8L6 2L13 4.5L8 11Z" fill="#4f8ee0" stroke="#2c64b4" stroke-width="0.7"/><path d="M2.5 7.6L6.5 3.4L11.5 5L7.8 9.4Z" fill="#e3ecfa"/><path d="M5 5.5L9 7M4.2 6.6L8.2 8" stroke="#8aa6d6" stroke-width="0.6"/></svg>
<div class="a" style="left:1167px;top:356px;width:58px;height:19.5px;background:linear-gradient(#efeff2,#e3e4e8);border:1px solid #b9bbc4;border-bottom:none;border-right:none"></div>
<div class="a" style="left:1188.9px;top:356px;width:36px;height:20px;overflow:hidden"><div class="t" style="left:0;top:4.8px;font-size:9px;line-height:11.25px;color:#3a3e4a">Projekt Kosten</div></div>
<div class="a" style="left:1224px;top:355px;width:56px;height:21px;background:#ffffff"></div>
<svg style="left:1174.5px;top:359px" width="14" height="14" viewBox="0 0 14 14"><circle cx="4" cy="3.6" r="3" fill="#e8b05a" stroke="#b07a2a" stroke-width="0.5"/><circle cx="9.5" cy="3.8" r="2.8" fill="#5a3a1a"/><path d="M0.3 12.8Q0.3 6.8 4 7Q7.5 7 7.5 12.8Z" fill="#2a6ed0"/><path d="M6 12.8Q6 7 9.5 7Q13 7 13 12.8Z" fill="#3cb43c"/><path d="M0.3 12.8Q0.3 7.5 4 7.6Q7.5 7.6 7.5 12.8Z" fill="#2a6ed0"/></svg>
<svg style="left:1227px;top:357.5px" width="14" height="14" viewBox="0 0 14 14">
<path d="M11.78 5.93L13.25 6.18L13.25 7.82L11.78 8.07L11.14 9.63L11.99 10.84L10.84 11.99L9.63 11.14L8.07 11.78L7.82 13.25L6.18 13.25L5.93 11.78L4.37 11.14L3.16 11.99L2.01 10.84L2.86 9.63L2.22 8.07L0.75 7.82L0.75 6.18L2.22 5.93L2.86 4.37L2.01 3.16L3.16 2.01L4.37 2.86L5.93 2.22L6.18 0.75L7.82 0.75L8.07 2.22L9.63 2.86L10.84 2.01L11.99 3.16L11.14 4.37Z" fill="#f4f5f8" stroke="#6c7182" stroke-width="1.1" stroke-linejoin="round"/><circle cx="7" cy="7" r="2" fill="none" stroke="#6c7182" stroke-width="1.1"/></svg>
<svg style="left:1251px;top:360.5px" width="4" height="7"><path d="M4 0V7L0 3.5Z" fill="#c5c7cd"/></svg>
<svg style="left:1270px;top:360.5px" width="4" height="7"><path d="M0 0V7L4 3.5Z" fill="#52555e"/></svg>
<div class="a" style="left:36px;top:375px;width:1244px;height:270px;background:#ebecf0;border:1px solid #a6a8b2;border-bottom:none"></div>
<div class="a" style="left:1091px;top:375px;width:75px;height:1.5px;background:#ffffff"></div>
<div class="a" style="left:37.5px;top:376.5px;width:745px;height:23.5px;background:linear-gradient(#ffffff,#fbfbfc 60%,#f1f2f5);border-right:1px solid #d3d5dc;border-bottom:1px solid #c4c6ce;border-radius:0 0 3px 0"></div>
<div class="a" style="left:770.5px;top:377px;width:1px;height:22px;background:#dcdee3"></div>
<svg style="left:774px;top:386.5px" width="5" height="3"><path d="M0 0H5L2.5 3Z" fill="#8d909a"/></svg>
<div class="a" style="left:41px;top:381.5px;width:3.5px;height:13px;background:linear-gradient(90deg,#d4d5da,#f2f2f4)"></div>
<div class="t" style="left:72.6px;top:383px;font-size:10px;line-height:12.5px;color:#20232b;">Neue Aktivität</div>
<div class="t" style="left:160px;top:383px;font-size:10px;line-height:12.5px;color:#20232b;">Dokument hinzufügen</div>
<div class="t" style="left:283.8px;top:383px;font-size:10px;line-height:12.5px;color:#20232b;">Dokument löschen</div>
<div class="t" style="left:392.5px;top:383px;font-size:10px;line-height:12.5px;color:#20232b;">Eintrag löschen</div>
<div class="t" style="left:484.8px;top:383px;font-size:10px;line-height:12.5px;color:#20232b;">Liste aktualisieren</div>
<div class="t" style="left:587.2px;top:383px;font-size:10px;line-height:12.5px;color:#20232b;">Als E-Mail versenden</div>
<div class="t" style="left:704.5px;top:383px;font-size:10px;line-height:12.5px;color:#20232b;">Liste drucken</div>
<svg style="left:55.5px;top:381.5px" width="14" height="14" viewBox="0 0 14 14"><path d="M1.5 0.8H10.5V11.5H1.5Z" fill="#fbfcfe" stroke="#8f9ab8" stroke-width="0.9"/><circle cx="9.5" cy="9.8" r="3.4" fill="#4a8ed8" stroke="#2a62aa" stroke-width="0.6"/><path d="M9.5 8V11.6M7.7 9.8H11.3" stroke="#fff" stroke-width="0.9"/></svg>
<svg style="left:142.4px;top:381.5px" width="14" height="14" viewBox="0 0 14 14"><circle cx="7" cy="7" r="6.3" fill="#5a9ae0" stroke="#3a6eb8" stroke-width="0.8"/><circle cx="7" cy="7" r="4.8" fill="none" stroke="#b8d6f4" stroke-width="0.8"/><path d="M7 3.6V10.4M3.6 7H10.4" stroke="#fff" stroke-width="2"/></svg>
<svg style="left:266.8px;top:381.5px" width="14" height="14" viewBox="0 0 14 14"><circle cx="7" cy="7" r="6.4" fill="#d8443a" stroke="#a82a24" stroke-width="0.6"/><path d="M4.6 4.6L9.4 9.4M9.4 4.6L4.6 9.4" stroke="#fff" stroke-width="2"/></svg>
<svg style="left:374.8px;top:381.5px" width="14" height="14" viewBox="0 0 14 14"><circle cx="7" cy="7" r="6.4" fill="#d8443a" stroke="#a82a24" stroke-width="0.6"/><path d="M4.6 4.6L9.4 9.4M9.4 4.6L4.6 9.4" stroke="#fff" stroke-width="2"/></svg>
<svg style="left:468.6px;top:381.5px" width="14" height="14" viewBox="0 0 14 14"><path d="M2 6A5 5 0 0 1 11 3.5L12.5 2V7H7.5L9.3 5.2A3 3 0 0 0 4 6Z" fill="#4a8ad8" stroke="#2a62aa" stroke-width="0.5"/><path d="M12 8A5 5 0 0 1 3 10.5L1.5 12V7H6.5L4.7 8.8A3 3 0 0 0 10 8Z" fill="#4a8ad8" stroke="#2a62aa" stroke-width="0.5"/></svg>
<svg style="left:570.7px;top:381.5px" width="14" height="14" viewBox="0 0 14 14"><rect x="0.5" y="1.5" width="12" height="9" fill="#f4f6fb" stroke="#7f8fb6" stroke-width="0.9"/><path d="M0.8 2L6.5 7L12.2 2M0.8 10L4.5 6M12.2 10L8.5 6" stroke="#7f8fb6" stroke-width="0.8" fill="none"/></svg>
<svg style="left:687.6px;top:381.5px" width="14" height="14" viewBox="0 0 14 14"><rect x="3" y="0.5" width="7" height="5" fill="#f4f4f6" stroke="#7a8598" stroke-width="0.8"/><path d="M1.5 5H11.5Q12.5 5 12.5 6V10H0.5V6Q0.5 5 1.5 5Z" fill="#5f6f8c" stroke="#3e4a62" stroke-width="0.7"/><rect x="2.5" y="8.5" width="8" height="4" fill="#e8f2fb" stroke="#7f9cc0" stroke-width="0.7"/><rect x="3.5" y="9.5" width="6" height="1.5" fill="#6fb0e8"/></svg>
<div class="a" style="left:36px;top:401.5px;width:1243px;height:1px;background:#b7b9c2"></div>
<div class="a" style="left:37px;top:402.5px;width:1241.5px;height:26.5px;background:linear-gradient(#e9eaee,#ebecf0)"></div>
<div class="t" style="left:41px;top:412px;font-size:9px;line-height:11.25px;color:#c2c4cd;">Ziehen Sie eine Spaltenüberschrift in diesen Bereich, um nach dieser zu gruppieren</div>
<svg style="left:1140px;top:402.5px;overflow:hidden" width="139" height="27" viewBox="0 0 139 27">
<defs>
<linearGradient id="pk" x1="0" x2="1"><stop offset="0" stop-color="#e9e3f0" stop-opacity="0"/><stop offset="1" stop-color="#e6d9ee"/></linearGradient>
<filter id="bl"><feGaussianBlur stdDeviation="1"/></filter>
</defs>
<path d="M-10 27H26L64 0H0Z" fill="url(#pk)"/>
<path d="M26 27H37L76 0H64Z" fill="#f0edf4"/>
<g filter="url(#bl)">
<path d="M37 27H70L110 0H76Z" fill="#d8cbee"/>
<path d="M48 27C62 18 80 8 96 0" stroke="#d0bfeb" stroke-width="4" fill="none"/>
</g>
<path d="M70 27H139V0H110Z" fill="#e2daf1"/>
<path d="M96 27L128 0" stroke="#cdbbe6" stroke-width="1.5" filter="url(#bl)"/>
<path d="M118 27L139 8V27Z" fill="#ebe6f3"/>
</svg>
<div class="a" style="left:37px;top:429.5px;width:1242px;height:172px;background:#ffffff"></div>
<div class="a" style="left:37px;top:428.7px;width:1241.5px;height:17.5px;background:linear-gradient(#f7f7f9,#efeff3);border-top:1px solid #d6d8de;border-bottom:1px solid #d3d5db"></div>
<div class="a" style="left:50.5px;top:430px;width:1px;height:16px;background:#d3d5dc"></div>
<div class="t" style="left:54.0px;top:433px;font-size:9px;line-height:11.25px;color:#2b2e38;">Datum</div>
<div class="a" style="left:140.2px;top:430px;width:1px;height:16px;background:#d3d5dc"></div>
<div class="t" style="left:143.7px;top:433px;font-size:9px;line-height:11.25px;color:#2b2e38;">Vorgangstyp</div>
<div class="a" style="left:230.4px;top:430px;width:1px;height:16px;background:#d3d5dc"></div>
<div class="t" style="left:233.9px;top:433px;font-size:9px;line-height:11.25px;color:#2b2e38;">Erstellt von</div>
<div class="a" style="left:326.9px;top:430px;width:1px;height:16px;background:#d3d5dc"></div>
<div class="t" style="left:330.4px;top:433px;font-size:9px;line-height:11.25px;color:#2b2e38;">Beschreibung</div>
<div class="a" style="left:476.9px;top:430px;width:1px;height:16px;background:#d3d5dc"></div>
<div class="t" style="left:480.4px;top:433px;font-size:9px;line-height:11.25px;color:#2b2e38;">Status</div>
<div class="a" style="left:595.7px;top:430px;width:1px;height:16px;background:#d3d5dc"></div>
<div class="t" style="left:599.2px;top:433px;font-size:9px;line-height:11.25px;color:#2b2e38;">Firma</div>
<div class="a" style="left:716.6px;top:430px;width:1px;height:16px;background:#d3d5dc"></div>
<div class="t" style="left:720.1px;top:433px;font-size:9px;line-height:11.25px;color:#2b2e38;">Kontaktperson</div>
<div class="a" style="left:837.4px;top:430px;width:1px;height:16px;background:#d3d5dc"></div>
<div class="t" style="left:840.9px;top:433px;font-size:9px;line-height:11.25px;color:#2b2e38;">Anhang</div>
<div class="a" style="left:920.9px;top:430px;width:1px;height:16px;background:#d3d5dc"></div>
<div class="t" style="left:924.4px;top:433px;font-size:9px;line-height:11.25px;color:#2b2e38;">Fälligkeit</div>
<div class="a" style="left:1010.5px;top:430px;width:1px;height:16px;background:#d3d5dc"></div>
<div class="t" style="left:1014.0px;top:433px;font-size:9px;line-height:11.25px;color:#2b2e38;">Zugewiesen an</div>
<div class="a" style="left:1107.3px;top:430px;width:1px;height:16px;background:#d3d5dc"></div>
<div class="t" style="left:1110.8px;top:433px;font-size:9px;line-height:11.25px;color:#2b2e38;">Erledigt</div>
<div class="a" style="left:1159.8px;top:430px;width:1px;height:16px;background:#d3d5dc"></div>
<div class="t" style="left:1163.3px;top:433px;font-size:9px;line-height:11.25px;color:#2b2e38;">Datum erledigt</div>
<svg style="left:130px;top:436px" width="6" height="4"><path d="M0 4H6L3 0Z" fill="#2b2e38"/></svg>
<div class="a" style="left:37px;top:446px;width:1242px;height:22.5px;background:#e1e8f7"></div>
<div class="a" style="left:37px;top:468.0px;width:1241.5px;height:1px;background:#d9dce3"></div>
<div class="t" style="left:54.0px;top:449px;font-size:9px;line-height:11.25px;color:#2b2e38;">02.01.2018 15:12</div>
<div class="t" style="left:143.7px;top:449px;font-size:9px;line-height:11.25px;color:#2b2e38;">Schadenmeldung</div>
<div class="t" style="left:233.9px;top:449px;font-size:9px;line-height:11.25px;color:#2b2e38;">Supervisor, Supervis...</div>
<div class="t" style="left:330.4px;top:449px;font-size:9px;line-height:11.25px;color:#2b2e38;">Schaden telefonisch gemeldet</div>
<div class="t" style="left:480.4px;top:449px;font-size:9px;line-height:11.25px;color:#2b2e38;">in Bearbeitung</div>
<div class="t" style="left:720.1px;top:449px;font-size:9px;line-height:11.25px;color:#2b2e38;">Hr. Müller (Mieter)</div>
<div class="t" style="left:1014.0px;top:449px;font-size:9px;line-height:11.25px;color:#2b2e38;">Supervisor, Supervis...</div>
<div class="a" style="left:1128px;top:452.0px;width:11px;height:11px;background:linear-gradient(#ececef,#fafafb);border:1px solid #a9acb5;box-shadow:inset 0 0 0 1px #f6f6f8"></div>
<div class="a" style="left:37px;top:468.5px;width:1242px;height:17.5px;background:#eff1f7"></div>
<div class="a" style="left:37px;top:485.5px;width:1241.5px;height:1px;background:#d9dce3"></div>
<div class="t" style="left:54.0px;top:471px;font-size:9px;line-height:11.25px;color:#2b2e38;">15.06.2022 09:45</div>
<div class="t" style="left:143.7px;top:471px;font-size:9px;line-height:11.25px;color:#2b2e38;">Email Eingehend</div>
<div class="t" style="left:233.9px;top:471px;font-size:9px;line-height:11.25px;color:#2b2e38;">Winter, Winfried</div>
<div class="t" style="left:330.4px;top:471px;font-size:9px;line-height:11.25px;color:#2b2e38;">Re: Jährliche Rauchwarnmelderwar</div>
<svg style="left:872px;top:470.25px" width="14" height="15" viewBox="0 0 14 15">
<path d="M2.5 0.5H9.5L12.5 3.5V13.8H2.5Z" fill="#f9fafc" stroke="#8795ad" stroke-width="0.8"/>
<path d="M9.5 0.5V3.5H12.5" fill="#e3e7ef" stroke="#8795ad" stroke-width="0.6"/>
<path d="M0.5 7.2L8.5 5L10.5 10L2.5 12.3Z" fill="#ece08e" stroke="#a99a3e" stroke-width="0.7"/>
<path d="M1 7.4L5.8 9.2L8.4 5.2M2.2 10L9.8 8" stroke="#b3a54c" stroke-width="0.5" fill="none"/></svg>
<div class="a" style="left:1128px;top:471.75px;width:11px;height:11px;background:linear-gradient(#ececef,#fafafb);border:1px solid #a9acb5;box-shadow:inset 0 0 0 1px #f6f6f8"></div>
<div class="a" style="left:37px;top:486px;width:1242px;height:17.899999999999977px;background:#ffffff"></div>
<div class="a" style="left:37px;top:503.4px;width:1241.5px;height:1px;background:#d9dce3"></div>
<div class="t" style="left:54.0px;top:489px;font-size:9px;line-height:11.25px;color:#2b2e38;">16.06.2022 12:04</div>
<div class="t" style="left:143.7px;top:489px;font-size:9px;line-height:11.25px;color:#2b2e38;">Email Eingehend</div>
<div class="t" style="left:233.9px;top:489px;font-size:9px;line-height:11.25px;color:#2b2e38;">Winter, Winfried</div>
<div class="t" style="left:330.4px;top:489px;font-size:9px;line-height:11.25px;color:#2b2e38;">W_2022-01 Wasserschaden_WEG</div>
<svg style="left:872px;top:487.95px" width="14" height="15" viewBox="0 0 14 15">
<path d="M2.5 0.5H9.5L12.5 3.5V13.8H2.5Z" fill="#f9fafc" stroke="#8795ad" stroke-width="0.8"/>
<path d="M9.5 0.5V3.5H12.5" fill="#e3e7ef" stroke="#8795ad" stroke-width="0.6"/>
<path d="M0.5 7.2L8.5 5L10.5 10L2.5 12.3Z" fill="#ece08e" stroke="#a99a3e" stroke-width="0.7"/>
<path d="M1 7.4L5.8 9.2L8.4 5.2M2.2 10L9.8 8" stroke="#b3a54c" stroke-width="0.5" fill="none"/></svg>
<div class="a" style="left:1128px;top:489.45px;width:11px;height:11px;background:linear-gradient(#ececef,#fafafb);border:1px solid #a9acb5;box-shadow:inset 0 0 0 1px #f6f6f8"></div>
<div class="a" style="left:37px;top:503.9px;width:1242px;height:17.399999999999977px;background:#eff1f7"></div>
<div class="a" style="left:37px;top:520.8px;width:1241.5px;height:1px;background:#d9dce3"></div>
<div class="t" style="left:54.0px;top:507px;font-size:9px;line-height:11.25px;color:#2b2e38;">16.06.2022 12:11</div>
<div class="t" style="left:143.7px;top:507px;font-size:9px;line-height:11.25px;color:#2b2e38;">Email Eingehend</div>
<div class="t" style="left:233.9px;top:507px;font-size:9px;line-height:11.25px;color:#2b2e38;">Winter, Winfried</div>
<div class="t" style="left:330.4px;top:507px;font-size:9px;line-height:11.25px;color:#2b2e38;">W_2022-01 Wasserschaden_WEG</div>
<svg style="left:872px;top:505.5999999999999px" width="14" height="15" viewBox="0 0 14 15">
<path d="M2.5 0.5H9.5L12.5 3.5V13.8H2.5Z" fill="#f9fafc" stroke="#8795ad" stroke-width="0.8"/>
<path d="M9.5 0.5V3.5H12.5" fill="#e3e7ef" stroke="#8795ad" stroke-width="0.6"/>
<path d="M0.5 7.2L8.5 5L10.5 10L2.5 12.3Z" fill="#ece08e" stroke="#a99a3e" stroke-width="0.7"/>
<path d="M1 7.4L5.8 9.2L8.4 5.2M2.2 10L9.8 8" stroke="#b3a54c" stroke-width="0.5" fill="none"/></svg>
<div class="a" style="left:1128px;top:507.0999999999999px;width:11px;height:11px;background:linear-gradient(#ececef,#fafafb);border:1px solid #a9acb5;box-shadow:inset 0 0 0 1px #f6f6f8"></div>
<div class="a" style="left:37px;top:521.3px;width:1242px;height:17.5px;background:#ffffff"></div>
<div class="a" style="left:37px;top:538.3px;width:1241.5px;height:1px;background:#d9dce3"></div>
<div class="t" style="left:54.0px;top:524px;font-size:9px;line-height:11.25px;color:#2b2e38;">16.02.2023 11:46</div>
<div class="t" style="left:143.7px;top:524px;font-size:9px;line-height:11.25px;color:#2b2e38;">Schadenmeldung</div>
<div class="t" style="left:233.9px;top:524px;font-size:9px;line-height:11.25px;color:#2b2e38;">Supervisor, Supervis...</div>
<div class="t" style="left:330.4px;top:524px;font-size:9px;line-height:11.25px;color:#2b2e38;">Schaden telefonisch gemeldet</div>
<div class="t" style="left:480.4px;top:524px;font-size:9px;line-height:11.25px;color:#2b2e38;">geplant</div>
<div class="t" style="left:599.2px;top:524px;font-size:9px;line-height:11.25px;color:#2b2e38;">Acadoro GmbH</div>
<div class="a" style="left:1128px;top:524.55px;width:11px;height:11px;background:linear-gradient(#ececef,#fafafb);border:1px solid #a9acb5;box-shadow:inset 0 0 0 1px #f6f6f8"></div>
<div class="a" style="left:37px;top:538.8px;width:1242px;height:17.40000000000009px;background:#eff1f7"></div>
<div class="a" style="left:37px;top:555.7px;width:1241.5px;height:1px;background:#d9dce3"></div>
<div class="t" style="left:54.0px;top:542px;font-size:9px;line-height:11.25px;color:#2b2e38;">23.02.2023 12:38</div>
<div class="t" style="left:143.7px;top:542px;font-size:9px;line-height:11.25px;color:#2b2e38;">Kundentermin</div>
<div class="t" style="left:233.9px;top:542px;font-size:9px;line-height:11.25px;color:#2b2e38;">Frühling, Fraja</div>
<div class="t" style="left:480.4px;top:542px;font-size:9px;line-height:11.25px;color:#2b2e38;">geplant</div>
<div class="a" style="left:1128px;top:542.0px;width:11px;height:11px;background:linear-gradient(#ececef,#fafafb);border:1px solid #a9acb5;box-shadow:inset 0 0 0 1px #f6f6f8"></div>
<div class="a" style="left:50.5px;top:446px;width:1px;height:110.5px;background:#dfe1e6"></div>
<div class="a" style="left:140.2px;top:446px;width:1px;height:110.5px;background:#dfe1e6"></div>
<div class="a" style="left:230.4px;top:446px;width:1px;height:110.5px;background:#dfe1e6"></div>
<div class="a" style="left:326.9px;top:446px;width:1px;height:110.5px;background:#dfe1e6"></div>
<div class="a" style="left:476.9px;top:446px;width:1px;height:110.5px;background:#dfe1e6"></div>
<div class="a" style="left:595.7px;top:446px;width:1px;height:110.5px;background:#dfe1e6"></div>
<div class="a" style="left:716.6px;top:446px;width:1px;height:110.5px;background:#dfe1e6"></div>
<div class="a" style="left:837.4px;top:446px;width:1px;height:110.5px;background:#dfe1e6"></div>
<div class="a" style="left:920.9px;top:446px;width:1px;height:110.5px;background:#dfe1e6"></div>
<div class="a" style="left:1010.5px;top:446px;width:1px;height:110.5px;background:#dfe1e6"></div>
<div class="a" style="left:1107.3px;top:446px;width:1px;height:110.5px;background:#dfe1e6"></div>
<div class="a" style="left:1159.8px;top:446px;width:1px;height:110.5px;background:#dfe1e6"></div>
<div class="a" style="left:37px;top:446px;width:13.5px;height:110.5px;background:#f3f4f7"></div>
<div class="a" style="left:37px;top:468.0px;width:13.5px;height:1px;background:#dfe1e6"></div>
<div class="a" style="left:37px;top:485.5px;width:13.5px;height:1px;background:#dfe1e6"></div>
<div class="a" style="left:37px;top:503.4px;width:13.5px;height:1px;background:#dfe1e6"></div>
<div class="a" style="left:37px;top:520.8px;width:13.5px;height:1px;background:#dfe1e6"></div>
<div class="a" style="left:37px;top:538.3px;width:13.5px;height:1px;background:#dfe1e6"></div>
<div class="a" style="left:37px;top:555.7px;width:13.5px;height:1px;background:#dfe1e6"></div>
<svg style="left:40px;top:453px" width="8" height="11" viewBox="0 0 8 11"><path d="M4.4 0.8Q5.8 0.3 6.4 1.4L3.5 9.3L1.3 10.3L1.2 8.1Z" fill="none" stroke="#3c3f48" stroke-width="1.1"/><path d="M1.5 10.2H6.8" stroke="#3c3f48" stroke-width="0.7"/></svg>
<div class="a" style="left:37px;top:601px;width:1242px;height:25px;background:linear-gradient(#e6e7eb,#e4e5ea);border-top:1px solid #d4d6dc"></div>
<div class="a" style="left:37px;top:626px;width:1242px;height:19px;background:#f2f2f5"></div>
<div class="a" style="left:37px;top:626px;width:272px;height:19px;background:#ffffff"></div>
<div class="a" style="left:36px;top:644.3px;width:1244px;height:2px;background:linear-gradient(#8a8d96,#aeb1b8)"></div>
<div class="a" style="left:36px;top:375px;width:1px;height:270px;background:#8e919b"></div>
<div class="a" style="left:1278.5px;top:375px;width:1.5px;height:270px;background:#8e919b"></div>
<div class="t" style="left:80.3px;top:630px;font-size:9px;line-height:11.25px;color:#2b2e38;">Datensatz 1 von 6</div>
<div class="a" style="left:40px;top:632px;width:1px;height:6px;background:#6a6d76"></div>
<svg style="left:41.5px;top:632px" width="3.5" height="6"><path d="M3.5 0V6L0 3.0Z" fill="#6a6d76"/></svg>
<svg style="left:45px;top:632px" width="3.5" height="6"><path d="M3.5 0V6L0 3.0Z" fill="#6a6d76"/></svg>
<svg style="left:54px;top:632px" width="3.5" height="6"><path d="M3.5 0V6L0 3.0Z" fill="#6a6d76"/></svg>
<svg style="left:57.5px;top:632px" width="3.5" height="6"><path d="M3.5 0V6L0 3.0Z" fill="#6a6d76"/></svg>
<svg style="left:69.5px;top:632px" width="3.5" height="6"><path d="M3.5 0V6L0 3.0Z" fill="#6a6d76"/></svg>
<svg style="left:164px;top:632px" width="3.5" height="6"><path d="M0 0V6L3.5 3.0Z" fill="#30333b"/></svg>
<svg style="left:176px;top:632px" width="3.5" height="6"><path d="M0 0V6L3.5 3.0Z" fill="#30333b"/></svg>
<svg style="left:179.5px;top:632px" width="3.5" height="6"><path d="M0 0V6L3.5 3.0Z" fill="#30333b"/></svg>
<svg style="left:188px;top:632px" width="3.5" height="6"><path d="M0 0V6L3.5 3.0Z" fill="#30333b"/></svg>
<svg style="left:191.5px;top:632px" width="3.5" height="6"><path d="M0 0V6L3.5 3.0Z" fill="#30333b"/></svg>
<div class="a" style="left:195px;top:632px;width:1px;height:6px;background:#30333b"></div>
<svg style="left:200px;top:631px" width="8" height="8"><path d="M4 0.5V7.5M0.5 4H7.5" stroke="#30333b" stroke-width="1.2"/></svg>
<svg style="left:212px;top:631px" width="8" height="8"><path d="M0.5 4H7.5" stroke="#9a9da5" stroke-width="1.1"/></svg>
<svg style="left:225px;top:633px" width="6" height="4"><path d="M0 4H6L3 0Z" fill="#9a9da5"/></svg>
<svg style="left:236px;top:630px" width="8" height="9"><path d="M0.5 5L3 8L7.5 0.5" stroke="#30333b" stroke-width="1.5" fill="none"/></svg>
<svg style="left:249px;top:631px" width="7" height="7"><path d="M0.5 0.5L6.5 6.5M6.5 0.5L0.5 6.5" stroke="#30333b" stroke-width="1.6"/></svg>
<svg style="left:260px;top:629px" width="14" height="14" viewBox="0 0 14 14">
<defs><linearGradient id="fn" x1="0" x2="1"><stop offset="0" stop-color="#9fa2a8"/><stop offset="0.5" stop-color="#f4f5f6"/><stop offset="1" stop-color="#8e9197"/></linearGradient></defs>
<ellipse cx="6.5" cy="2" rx="5.8" ry="1.6" fill="#d7d9dc" stroke="#85888e" stroke-width="0.6"/>
<path d="M0.7 2Q6.5 4 12.3 2L7.8 7.5V12L5.2 11V7.5Z" fill="url(#fn)" stroke="#7d8086" stroke-width="0.6"/>
<path d="M9.5 6.8L12.6 9.9L9.5 13L6.4 9.9Z" fill="#2fb52f" stroke="#1d7d1d" stroke-width="0.5"/><path d="M9.5 8.4V11.4M8 9.9H11" stroke="#fff" stroke-width="0.9"/></svg>
<svg style="left:276.5px;top:628px" width="14" height="15" viewBox="0 0 14 15">
<ellipse cx="6" cy="4" rx="5.5" ry="1.5" fill="#d7d9dc" stroke="#85888e" stroke-width="0.6"/>
<path d="M0.5 4Q6 6 11.5 4L7.3 9V13.5L4.7 12.5V9Z" fill="url(#fn)" stroke="#7d8086" stroke-width="0.6"/>
<path d="M9.5 0.3L13 3.8H11V7.5H8V3.8H6Z" fill="#35bb2f" stroke="#1d7d1d" stroke-width="0.5"/></svg>
<svg style="left:292px;top:627px" width="14" height="14" viewBox="0 0 14 14">
<path d="M0.5 6L9 3L13 9L4.5 13Z" fill="#f4dd8a" stroke="#c9ad4a" stroke-width="0.7"/>
<circle cx="9.5" cy="4.5" r="3.8" fill="#eef2f8" stroke="#8c98ad" stroke-width="0.8"/><path d="M9.5 2.5V4.5H11" stroke="#50607a" stroke-width="0.8" fill="none"/></svg>
<svg style="left:314px;top:632px" width="3.5" height="6"><path d="M3.5 0V6L0 3.0Z" fill="#cdd0d6"/></svg>
<svg style="left:1269px;top:632px" width="3.5" height="6"><path d="M0 0V6L3.5 3.0Z" fill="#cdd0d6"/></svg>
<div class="a" style="left:921px;top:448px;width:88px;height:19px;background:#ffffff"></div>
<div class="a" style="left:996.5px;top:448px;width:12.5px;height:19px;background:linear-gradient(#e4e5ea,#d9dae0);border-left:1px solid #c9ccd3"></div>
<svg style="left:1000.5px;top:456.5px" width="5" height="3"><path d="M0 0H5L2.5 3Z" fill="#30333c"/></svg>
<div class="a" style="left:924px;top:449.5px;width:1px;height:10px;background:#20232b"></div>
<div class="a" style="left:1116px;top:664px;width:3px;height:10px;background:#d6d7dc"></div>
<div class="a" style="left:921px;top:467.5px;width:195px;height:206px;background:#ffffff;border:1px solid #a3a6ae;border-right:2px solid #7f828b;border-bottom:2.5px solid #7f828b"></div>
<div class="t" style="left:817px;width:400px;text-align:center;top:482px;font-size:9px;line-height:11.25px;color:#353946;-webkit-text-stroke-width:0.1px">Dienstag, 16. Mai 2023</div>
<div class="t" style="left:817px;width:400px;text-align:center;top:503px;font-size:9px;line-height:11.25px;color:#353946;-webkit-text-stroke-width:0.1px">Mai 2023</div>
<svg style="left:933px;top:502.5px" width="10" height="10" viewBox="0 0 10 10"><circle cx="5" cy="5" r="4.5" fill="#f4f4f6" stroke="#b5b8c0" stroke-width="0.8"/></svg>
<svg style="left:1092px;top:502.5px" width="10" height="10" viewBox="0 0 10 10"><circle cx="5" cy="5" r="4.5" fill="#f4f4f6" stroke="#b5b8c0" stroke-width="0.8"/></svg>
<svg style="left:936.5px;top:505px" width="2.5" height="4.5"><path d="M2.5 0V4.5L0 2.25Z" fill="#8a8d96"/></svg>
<svg style="left:1096px;top:505px" width="2.5" height="4.5"><path d="M0 0V4.5L2.5 2.25Z" fill="#8a8d96"/></svg>
<div class="t" style="left:742px;width:400px;text-align:center;top:520px;font-size:9px;line-height:11.25px;color:#353946;-webkit-text-stroke-width:0.1px">MO</div>
<div class="t" style="left:766.8px;width:400px;text-align:center;top:520px;font-size:9px;line-height:11.25px;color:#353946;-webkit-text-stroke-width:0.1px">DI</div>
<div class="t" style="left:791.7px;width:400px;text-align:center;top:520px;font-size:9px;line-height:11.25px;color:#353946;-webkit-text-stroke-width:0.1px">MI</div>
<div class="t" style="left:816.5px;width:400px;text-align:center;top:520px;font-size:9px;line-height:11.25px;color:#353946;-webkit-text-stroke-width:0.1px">DO</div>
<div class="t" style="left:841.3px;width:400px;text-align:center;top:520px;font-size:9px;line-height:11.25px;color:#353946;-webkit-text-stroke-width:0.1px">FR</div>
<div class="t" style="left:866.2px;width:400px;text-align:center;top:520px;font-size:9px;line-height:11.25px;color:#353946;-webkit-text-stroke-width:0.1px">SA</div>
<div class="t" style="left:891px;width:400px;text-align:center;top:520px;font-size:9px;line-height:11.25px;color:#353946;-webkit-text-stroke-width:0.1px">SO</div>
<div class="a" style="left:955px;top:573.8px;width:25px;height:15.5px;background:#ebebee;border:1px solid #dcdde2"></div>
<div class="t" style="left:549.2px;width:400px;text-align:right;top:539px;font-size:9.3px;line-height:11.62px;color:#2b2e38;-webkit-text-stroke-width:0.1px">1</div>
<div class="t" style="left:574.2px;width:400px;text-align:right;top:539px;font-size:9.3px;line-height:11.62px;color:#2b2e38;-webkit-text-stroke-width:0.1px">2</div>
<div class="t" style="left:599.2px;width:400px;text-align:right;top:539px;font-size:9.3px;line-height:11.62px;color:#2b2e38;-webkit-text-stroke-width:0.1px">3</div>
<div class="t" style="left:624.2px;width:400px;text-align:right;top:539px;font-size:9.3px;line-height:11.62px;color:#2b2e38;-webkit-text-stroke-width:0.1px">4</div>
<div class="t" style="left:649.2px;width:400px;text-align:right;top:539px;font-size:9.3px;line-height:11.62px;color:#2b2e38;-webkit-text-stroke-width:0.1px">5</div>
<div class="t" style="left:673.9000000000001px;width:400px;text-align:right;top:539px;font-size:9.3px;line-height:11.62px;color:#c8333a;-webkit-text-stroke-width:0.1px">6</div>
<div class="t" style="left:699px;width:400px;text-align:right;top:539px;font-size:9.3px;line-height:11.62px;color:#c8333a;-webkit-text-stroke-width:0.1px">7</div>
<div class="t" style="left:549.2px;width:400px;text-align:right;top:558px;font-size:9.3px;line-height:11.62px;color:#2b2e38;-webkit-text-stroke-width:0.1px">8</div>
<div class="t" style="left:574.2px;width:400px;text-align:right;top:558px;font-size:9.3px;line-height:11.62px;color:#2b2e38;-webkit-text-stroke-width:0.1px">9</div>
<div class="t" style="left:599.2px;width:400px;text-align:right;top:558px;font-size:9.3px;line-height:11.62px;color:#2b2e38;-webkit-text-stroke-width:0.1px">10</div>
<div class="t" style="left:624.2px;width:400px;text-align:right;top:558px;font-size:9.3px;line-height:11.62px;color:#2b2e38;-webkit-text-stroke-width:0.1px">11</div>
<div class="t" style="left:649.2px;width:400px;text-align:right;top:558px;font-size:9.3px;line-height:11.62px;color:#2b2e38;-webkit-text-stroke-width:0.1px">12</div>
<div class="t" style="left:673.9000000000001px;width:400px;text-align:right;top:558px;font-size:9.3px;line-height:11.62px;color:#c8333a;-webkit-text-stroke-width:0.1px">13</div>
<div class="t" style="left:699px;width:400px;text-align:right;top:558px;font-size:9.3px;line-height:11.62px;color:#c8333a;-webkit-text-stroke-width:0.1px">14</div>
<div class="t" style="left:549.2px;width:400px;text-align:right;top:576px;font-size:9.3px;line-height:11.62px;color:#2b2e38;-webkit-text-stroke-width:0.1px">15</div>
<div class="t" style="left:574.2px;width:400px;text-align:right;top:576px;font-size:9.3px;line-height:11.62px;color:#2b2e38;-webkit-text-stroke-width:0.1px">16</div>
<div class="t" style="left:599.2px;width:400px;text-align:right;top:576px;font-size:9.3px;line-height:11.62px;color:#2b2e38;-webkit-text-stroke-width:0.1px">17</div>
<div class="t" style="left:624.2px;width:400px;text-align:right;top:576px;font-size:9.3px;line-height:11.62px;color:#2b2e38;-webkit-text-stroke-width:0.1px">18</div>
<div class="t" style="left:649.2px;width:400px;text-align:right;top:576px;font-size:9.3px;line-height:11.62px;color:#2b2e38;-webkit-text-stroke-width:0.1px">19</div>
<div class="t" style="left:673.9000000000001px;width:400px;text-align:right;top:576px;font-size:9.3px;line-height:11.62px;color:#c8333a;-webkit-text-stroke-width:0.1px">20</div>
<div class="t" style="left:699px;width:400px;text-align:right;top:576px;font-size:9.3px;line-height:11.62px;color:#c8333a;-webkit-text-stroke-width:0.1px">21</div>
<div class="t" style="left:549.2px;width:400px;text-align:right;top:595px;font-size:9.3px;line-height:11.62px;color:#2b2e38;-webkit-text-stroke-width:0.1px">22</div>
<div class="t" style="left:574.2px;width:400px;text-align:right;top:595px;font-size:9.3px;line-height:11.62px;color:#2b2e38;-webkit-text-stroke-width:0.1px">23</div>
<div class="t" style="left:599.2px;width:400px;text-align:right;top:595px;font-size:9.3px;line-height:11.62px;color:#2b2e38;-webkit-text-stroke-width:0.1px">24</div>
<div class="t" style="left:624.2px;width:400px;text-align:right;top:595px;font-size:9.3px;line-height:11.62px;color:#2b2e38;-webkit-text-stroke-width:0.1px">25</div>
<div class="t" style="left:649.2px;width:400px;text-align:right;top:595px;font-size:9.3px;line-height:11.62px;color:#2b2e38;-webkit-text-stroke-width:0.1px">26</div>
<div class="t" style="left:673.9000000000001px;width:400px;text-align:right;top:595px;font-size:9.3px;line-height:11.62px;color:#c8333a;-webkit-text-stroke-width:0.1px">27</div>
<div class="t" style="left:699px;width:400px;text-align:right;top:595px;font-size:9.3px;line-height:11.62px;color:#c8333a;-webkit-text-stroke-width:0.1px">28</div>
<div class="t" style="left:549.2px;width:400px;text-align:right;top:613px;font-size:9.3px;line-height:11.62px;color:#2b2e38;-webkit-text-stroke-width:0.1px">29</div>
<div class="t" style="left:574.2px;width:400px;text-align:right;top:613px;font-size:9.3px;line-height:11.62px;color:#2b2e38;-webkit-text-stroke-width:0.1px">30</div>
<div class="t" style="left:599.2px;width:400px;text-align:right;top:613px;font-size:9.3px;line-height:11.62px;color:#2b2e38;-webkit-text-stroke-width:0.1px">31</div>
<div class="t" style="left:624.2px;width:400px;text-align:right;top:613px;font-size:9.3px;line-height:11.62px;color:#c9cbd1;-webkit-text-stroke-width:0.1px">1</div>
<div class="t" style="left:649.2px;width:400px;text-align:right;top:613px;font-size:9.3px;line-height:11.62px;color:#c9cbd1;-webkit-text-stroke-width:0.1px">2</div>
<div class="t" style="left:673.9000000000001px;width:400px;text-align:right;top:613px;font-size:9.3px;line-height:11.62px;color:#c9cbd1;-webkit-text-stroke-width:0.1px">3</div>
<div class="t" style="left:699px;width:400px;text-align:right;top:613px;font-size:9.3px;line-height:11.62px;color:#c9cbd1;-webkit-text-stroke-width:0.1px">4</div>
<div class="t" style="left:549.2px;width:400px;text-align:right;top:632px;font-size:9.3px;line-height:11.62px;color:#c9cbd1;-webkit-text-stroke-width:0.1px">5</div>
<div class="t" style="left:574.2px;width:400px;text-align:right;top:632px;font-size:9.3px;line-height:11.62px;color:#c9cbd1;-webkit-text-stroke-width:0.1px">6</div>
<div class="t" style="left:599.2px;width:400px;text-align:right;top:632px;font-size:9.3px;line-height:11.62px;color:#c9cbd1;-webkit-text-stroke-width:0.1px">7</div>
<div class="t" style="left:624.2px;width:400px;text-align:right;top:632px;font-size:9.3px;line-height:11.62px;color:#c9cbd1;-webkit-text-stroke-width:0.1px">8</div>
<div class="t" style="left:649.2px;width:400px;text-align:right;top:632px;font-size:9.3px;line-height:11.62px;color:#c9cbd1;-webkit-text-stroke-width:0.1px">9</div>
<div class="t" style="left:673.9000000000001px;width:400px;text-align:right;top:632px;font-size:9.3px;line-height:11.62px;color:#c9cbd1;-webkit-text-stroke-width:0.1px">10</div>
<div class="t" style="left:699px;width:400px;text-align:right;top:632px;font-size:9.3px;line-height:11.62px;color:#c9cbd1;-webkit-text-stroke-width:0.1px">11</div>
<div class="t" style="left:816.5px;width:400px;text-align:center;top:650px;font-size:9px;line-height:11.25px;color:#2b2e38;">Leeren</div>
<div class="a" style="left:24px;top:40px;width:56px;height:67px;border:3px solid #ff0000"></div>
<div class="t" style="left:10px;top:40px;font-size:14px;line-height:17.5px;color:#ff0000;font-weight:bold;">5.</div>
<div class="a" style="left:1089px;top:354px;width:79px;height:23px;border:3px solid #ff0000"></div>
<div class="t" style="left:1089.5px;top:340px;font-size:14px;line-height:17.5px;color:#ff0000;font-weight:bold;">2.</div>
<div class="a" style="left:918px;top:445px;width:93.5px;height:24.7px;border:3px solid #ff0000"></div>
<div class="t" style="left:904.2px;top:449px;font-size:14px;line-height:17.5px;color:#ff0000;font-weight:bold;">4.</div>
<svg style="left:950px;top:564px" width="40" height="32"><ellipse cx="19.7" cy="15.4" rx="14.2" ry="10.8" fill="none" stroke="#ff0000" stroke-width="3"/></svg>
</body></html>
